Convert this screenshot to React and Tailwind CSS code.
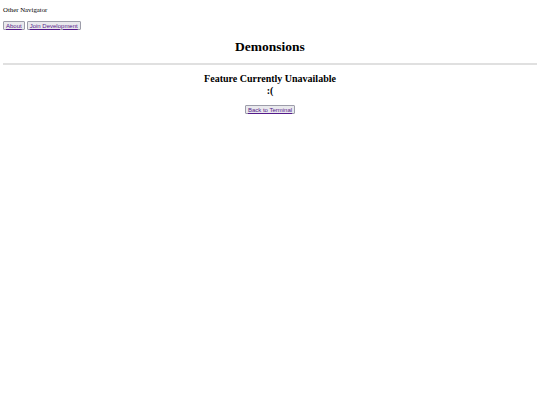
import React from 'react';

const NavButton = ({ label }) => (
  <button
    type="button"
    className="h-[9px] px-[2px] bg-[#e9e9ed] border border-[#9d9daa] rounded-[1px] text-[6px] leading-none font-['Liberation_Sans',Arial,sans-serif]"
  >
    <span className="text-[#551a8b] underline decoration-[0.5px]">{label}</span>
  </button>
);

const App = () => {
  return (
    <div className="min-h-[405px] bg-white text-black px-[3px] pt-[6px] font-['Liberation_Serif','Times_New_Roman',serif]">
      {/* top navigation */}
      <div className="text-[6.8px] leading-[8px] text-black">Other Navigator</div>
      <div className="flex gap-[2px] mt-[7px]">
        <NavButton label="About" />
        <NavButton label="Join Development" />
      </div>

      <h1 className="mt-[9px] text-center text-[13.5px] leading-[16px] font-bold">
        Demonsions
      </h1>
      <hr className="mt-[8px] border-t-[2px] border-[#e0e0e0]" />

      {/* page body */}
      <div className="text-center">
        <h2 className="mt-[8px] text-[10px] leading-[12px] font-bold">
          Feature Currently Unavailable
        </h2>
        <h2 className="text-[10px] leading-[12px] font-bold">:(</h2>
        <div className="mt-[8px] flex justify-center">
          <NavButton label="Back to Terminal" />
        </div>
      </div>
    </div>
  );
};

export default App;
